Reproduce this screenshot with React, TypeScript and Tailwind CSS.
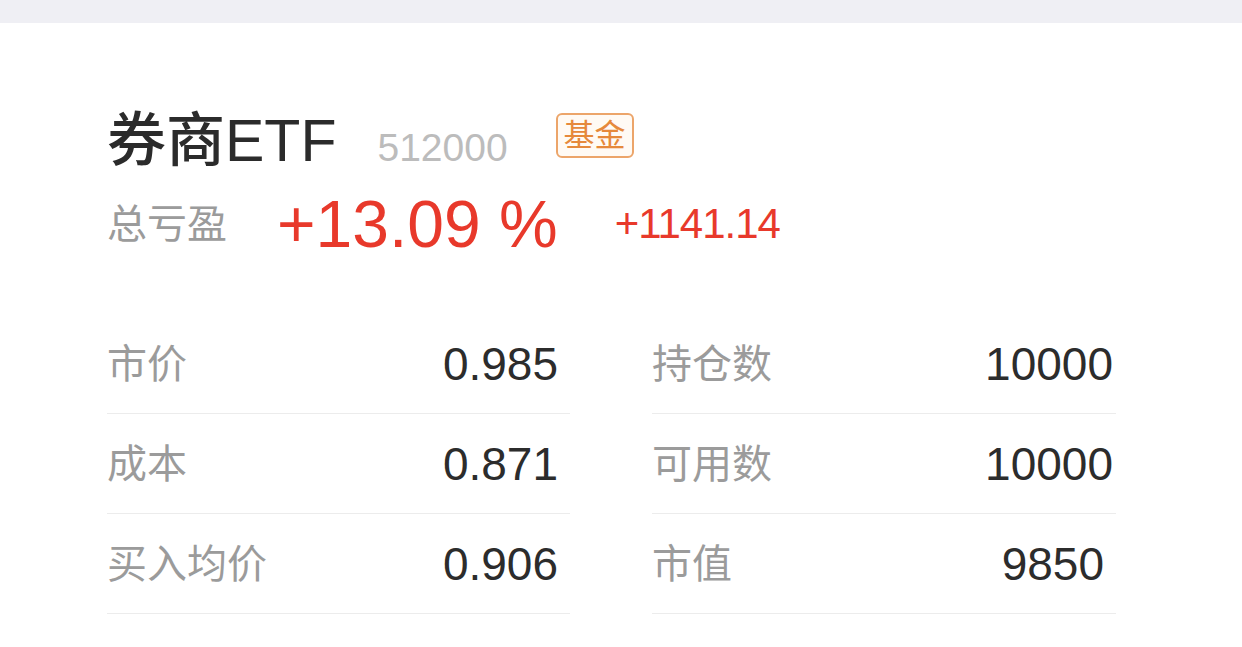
import React from "react";

type Cell = { label: string; value: string; extra?: string };

const rows: [Cell, Cell][] = [
  [
    { label: "市价", value: "0.985" },
    { label: "持仓数", value: "10000" },
  ],
  [
    { label: "成本", value: "0.871" },
    { label: "可用数", value: "10000" },
  ],
  [
    { label: "买入均价", value: "0.906" },
    { label: "市值", value: "9850", extra: "pr-[12px]" },
  ],
];

const font = "font-['Liberation_Sans','Noto_Sans_CJK_SC',sans-serif]";

function Row({ cell, pad }: { cell: Cell; pad: string }) {
  return (
    <div className="flex h-[100px] items-center justify-between border-b border-[#ececec]">
      <span className="text-[40px] leading-none text-[#9b9b9b]">{cell.label}</span>
      <span className={`text-[46px] leading-none text-[#2c2c2c] ${cell.extra ?? pad}`}>{cell.value}</span>
    </div>
  );
}

export default function App() {
  return (
    <div className={`min-h-screen bg-white ${font}`}>
      <div className="h-[23px] bg-[#efeff4]" />

      <div className="pl-[107px] pt-[89px]">
        {/* name, code, type */}
        <div className="flex items-baseline">
          <span className="text-[59px] font-medium leading-none text-[#2b2b2b]">券商ETF</span>
          <span className="ml-[41px] text-[39px] leading-none text-[#bcbcbc]">512000</span>
          <span className="ml-[48px] mt-[1px] flex h-[45px] w-[78px] self-start items-center justify-center rounded-[6px] border-2 border-[#eca56a] bg-[#fffaf4] text-[31px] leading-none text-[#e6893b]">
            基金
          </span>
        </div>

        {/* total P/L */}
        <div className="mt-[20px] flex items-center">
          <span className="text-[40px] leading-none text-[#9b9b9b]">总亏盈</span>
          <span className="ml-[50px] text-[66px] leading-none text-[#e8392b]">+13.09 %</span>
          <span className="ml-[57px] text-[42px] leading-none tracking-[-1px] text-[#e8392b]">+1141.14</span>
        </div>

        {/* holdings table */}
        <div className="mt-[57px] grid w-[1009px] grid-cols-[463px_464px] gap-x-[82px]">
          {rows.map(([l, r]) => (
            <React.Fragment key={l.label}>
              <Row cell={l} pad="pr-[12px]" />
              <Row cell={r} pad="pr-[3px]" />
            </React.Fragment>
          ))}
        </div>
      </div>
    </div>
  );
}
